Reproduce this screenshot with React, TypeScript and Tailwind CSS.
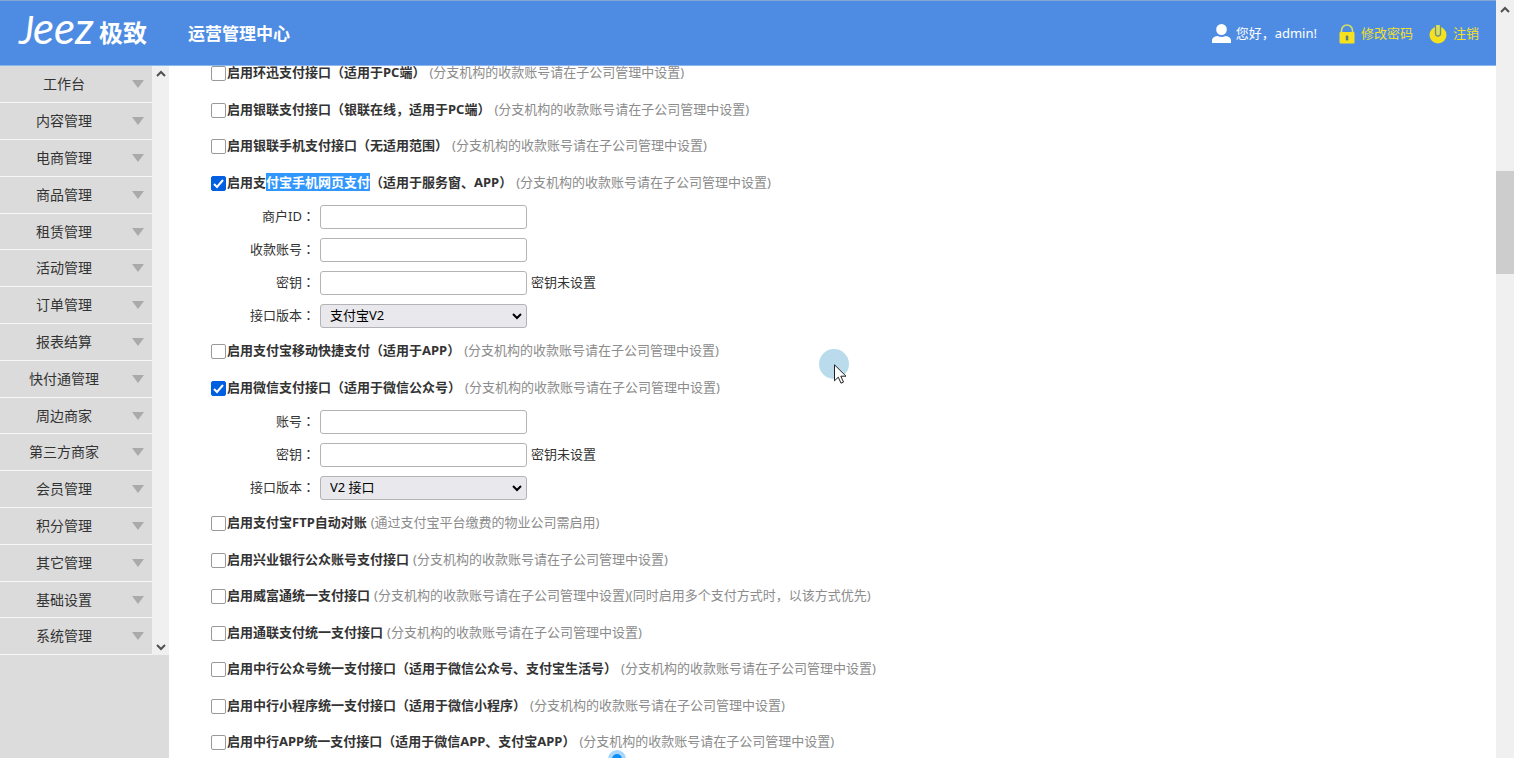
import type { ReactNode } from "react";

interface Field {
    label: string;
    options?: string[];
    hint?: string;
}

interface Channel {
    id: string;
    title: ReactNode;
    note: string;
    checked?: boolean;
    fields?: Field[];
}

const MENU = [
    "工作台", "内容管理", "电商管理", "商品管理", "租赁管理", "活动管理", "订单管理", "报表结算",
    "快付通管理", "周边商家", "第三方商家", "会员管理", "积分管理", "其它管理", "基础设置", "系统管理",
];

const BRANCH_NOTE = "(分支机构的收款账号请在子公司管理中设置)";

const CHANNELS: Channel[] = [
    { id: "huanxun", title: "启用环迅支付接口（适用于PC端）", note: BRANCH_NOTE },
    { id: "unionpay", title: "启用银联支付接口（银联在线，适用于PC端）", note: BRANCH_NOTE },
    { id: "unionpay-mobile", title: "启用银联手机支付接口（无适用范围）", note: BRANCH_NOTE },
    {
        id: "alipay-wap",
        title: <>启用支<mark className="bg-[#3297fd] text-white">付宝手机网页支付</mark>（适用于服务窗、APP）</>,
        note: BRANCH_NOTE,
        checked: true,
        fields: [
            { label: "商户ID" },
            { label: "收款账号" },
            { label: "密钥", hint: "密钥未设置" },
            { label: "接口版本", options: ["支付宝V2", "支付宝V1"] },
        ],
    },
    { id: "alipay-app", title: "启用支付宝移动快捷支付（适用于APP）", note: BRANCH_NOTE },
    {
        id: "wechat",
        title: "启用微信支付接口（适用于微信公众号）",
        note: BRANCH_NOTE,
        checked: true,
        fields: [
            { label: "账号" },
            { label: "密钥", hint: "密钥未设置" },
            { label: "接口版本", options: ["V2 接口", "V3 接口"] },
        ],
    },
    { id: "alipay-ftp", title: "启用支付宝FTP自动对账", note: "(通过支付宝平台缴费的物业公司需启用)" },
    { id: "cib", title: "启用兴业银行公众账号支付接口", note: BRANCH_NOTE },
    { id: "swiftpass", title: "启用威富通统一支付接口", note: BRANCH_NOTE + "(同时启用多个支付方式时，以该方式优先)" },
    { id: "allinpay", title: "启用通联支付统一支付接口", note: BRANCH_NOTE },
    { id: "boc-mp", title: "启用中行公众号统一支付接口（适用于微信公众号、支付宝生活号）", note: BRANCH_NOTE },
    { id: "boc-mini", title: "启用中行小程序统一支付接口（适用于微信小程序）", note: BRANCH_NOTE },
    { id: "boc-app", title: "启用中行APP统一支付接口（适用于微信APP、支付宝APP）", note: BRANCH_NOTE },
];

function Chevron({ up = false, className = "" }: { up?: boolean; className?: string }) {
    return (
        <svg viewBox="0 0 10 7" className={`w-[10px] h-[7px] fill-none stroke-[#505050] stroke-2 ${className}`} aria-hidden="true">
            <path d={up ? "M1 6 5 2l4 4" : "M1 1l4 4 4-4"} />
        </svg>
    );
}

function Header() {
    return (
        <header className="h-[66px] shrink-0 bg-[#4e8ce4] border-t border-t-[#86a5d3] border-b border-b-[#8db5ee] pt-px flex items-center text-white">
            <a href="#home" className="w-[188px] shrink-0 pl-4">
                <svg viewBox="0 0 134 56" className="w-[134px] h-14 fill-white">
                    <text y="38" className="font-[Lato] italic text-[38px]">
                        <tspan x="3">J</tspan>
                        <tspan x="17" className="text-[44px]">eez</tspan>
                    </text>
                    <text x="83" y="36" className="text-[24px] font-bold">极致</text>
                </svg>
            </a>
            <h1 className="text-[17px] font-bold">运营管理中心</h1>
            <div className="ml-auto pr-[17px] flex items-center gap-[22px] text-[13px]">
                <span className="flex items-center gap-[5px]">
                    <svg viewBox="0 0 19 19" className="w-[19px] h-[19px] fill-white" aria-hidden="true">
                        <ellipse cx="9.5" cy="5.5" rx="5.3" ry="5.5" />
                        <path d="M0 19v-2.500c0-2.500 2-4 5.500-4.500 2.500 1.200 5.500 1.200 8 0 3.500.5 5.500 2 5.500 4.500V19z" />
                    </svg>
                    您好，admin!
                </span>
                <a href="#password" className="flex items-center gap-[6px] text-[#f2e02a]">
                    <svg viewBox="0 0 16 20" className="w-4 h-5" aria-hidden="true">
                        <path d="M2.500 9V6.500a5.500 5.500 0 0 1 11 0V9" fill="none" stroke="#d9df62" strokeWidth="1.500" />
                        <rect x="0.500" y="8" width="15" height="11.500" rx="1" fill="#f5e11e" />
                        <rect x="6.800" y="11.500" width="2.500" height="5" rx="1" fill="#5f7d80" />
                    </svg>
                    修改密码
                </a>
                <a href="#logout" className="-ml-[6px] flex items-center gap-[6px] text-[#f2e02a]">
                    <svg viewBox="0 0 18 20" className="w-[18px] h-5" aria-hidden="true">
                        <circle cx="9" cy="11" r="8.500" fill="#f5e11e" />
                        <path d="M6.500 1v8.500a2.500 2.500 0 0 0 5 0V1" fill="#d9df62" stroke="#6d8f8a" strokeWidth="1.300" />
                    </svg>
                    注销
                </a>
            </div>
        </header>
    );
}

function Sidebar() {
    return (
        <aside className="w-[169px] shrink-0 bg-[#dcdcdc]">
            <div className="flex bg-[#f0f0f0]">
                <nav className="flex-1">
                    {MENU.map((item) => (
                        <button key={item} type="button"
                                className="w-full h-[37px] nth-[5n]:h-9 bg-[#dbdbdb] border-b border-[#f7f7f7] pr-2 flex items-center text-sm text-[#333] cursor-pointer"
                        >
                            <span className="flex-1 pr-1 text-center">{item}</span>
                            <svg viewBox="0 0 12 8" className="w-3 h-2 fill-[#aaa]" aria-hidden="true">
                                <path d="M0 0h12L6 8z" />
                            </svg>
                        </button>
                    ))}
                </nav>
                <div className="w-[17px] py-1 flex flex-col items-center justify-between">
                    <Chevron up />
                    <Chevron />
                </div>
            </div>
        </aside>
    );
}

function FieldRow({ id, field }: { id: string; field: Field }) {
    return (
        <div className="h-[33px] flex items-center">
            <label htmlFor={id} className="w-[109px] pr-[5px] text-right">
                {field.label}<span className="font-['Noto_Sans_CJK_TC',sans-serif]">：</span>
            </label>
            {field.options ? (
                <div className="relative w-[207px]">
                    <select id={id} className="w-full h-6 appearance-none bg-[#e9e9ed] border border-[#b4b4b8] rounded-[3px] pl-[9px] text-black">
                        {field.options.map((option) => <option key={option}>{option}</option>)}
                    </select>
                    <Chevron className="absolute right-[5px] top-[9px] pointer-events-none stroke-black" />
                </div>
            ) : (
                <input id={id} type="text" className="w-[207px] h-6 bg-white border border-[#b4b4b4] rounded-[3px] px-2" />
            )}
            {field.hint && <span className="ml-1">{field.hint}</span>}
        </div>
    );
}

function ChannelItem({ channel }: { channel: Channel }) {
    return (
        <li className="even:pt-px">
            <label className="h-9 flex items-center whitespace-nowrap">
                <span className="relative mt-px mr-px w-[15px] h-[15px] shrink-0">
                    <input type="checkbox" defaultChecked={channel.checked}
                           className="peer block w-full h-full appearance-none rounded-[2px] border border-[#999] bg-white checked:bg-[#0060df] checked:border-[#0060df]"
                    />
                    <svg viewBox="0 0 15 15" className="absolute inset-0 hidden peer-checked:block fill-none stroke-white stroke-2 pointer-events-none" aria-hidden="true">
                        <path d="M3 8l3 3 6-7" />
                    </svg>
                </span>
                <b>{channel.title}</b>
                <span className="ml-1 text-[#8c8c8c]">{channel.note}</span>
            </label>
            {channel.fields && (
                <div className="-mt-px pb-px">
                    {channel.fields.map((field, index) => (
                        <FieldRow key={field.label} id={`${channel.id}-${index}`} field={field} />
                    ))}
                </div>
            )}
        </li>
    );
}

function Pointer() {
    return (
        <div className="absolute left-[819px] top-[349px] w-[30px] h-[36px] pointer-events-none">
            <div className="w-[30px] h-[30px] rounded-full bg-[#b9dbec]" />
            <svg viewBox="0 0 13 20" className="absolute left-[15px] top-[15px] w-[13px] h-5 fill-white stroke-[#222]" aria-hidden="true">
                <path d="M.5.8v16l3.800-3.600 2.700 6 2.500-1.100-2.700-5.900h5.200z" />
            </svg>
        </div>
    );
}

export default function App() {
    return (
        <div className="relative h-screen flex overflow-hidden bg-white text-[13px] text-[#333] font-['Noto_Sans','Noto_Sans_CJK_SC',sans-serif]">
            <div className="flex-1 min-w-0 flex flex-col">
                <Header />
                <div className="flex-1 min-h-0 flex">
                    <Sidebar />
                    <main className="flex-1 min-w-0 overflow-hidden pl-[42px]">
                        <ul className="-mt-[11px]">
                            {CHANNELS.map((channel) => <ChannelItem key={channel.id} channel={channel} />)}
                        </ul>
                    </main>
                </div>
            </div>
            <div className="w-[18px] shrink-0 bg-[#f0f0f0] flex flex-col items-center pt-[6px]">
                <Chevron up />
                <div className="mt-[158px] w-full h-[103px] bg-[#cdcdcd]" />
            </div>
            <Pointer />
            <div className="absolute left-[608px] -bottom-[10px] w-[18px] h-[18px] rounded-full bg-[#0a8ff5] border-4 border-[#a8d5fa]" />
        </div>
    );
}
